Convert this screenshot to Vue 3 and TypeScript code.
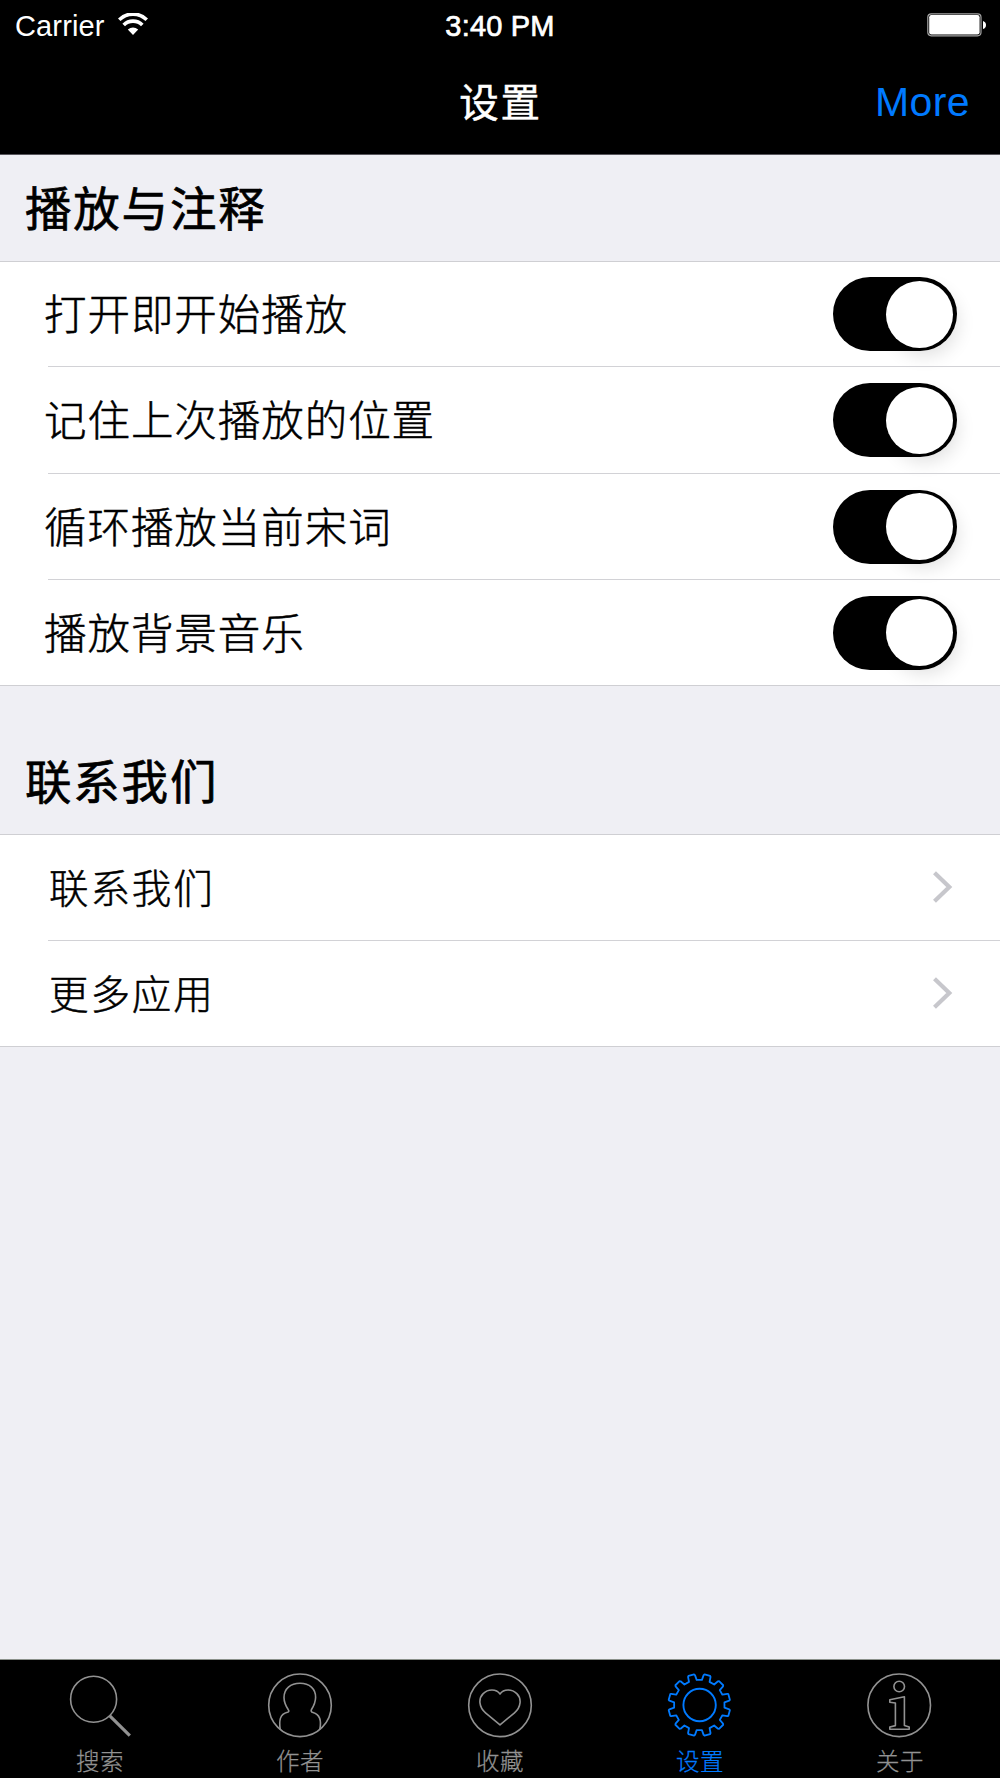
<script setup lang="ts">
import { ref } from 'vue'

interface SwitchRow { label: string; on: boolean }
interface Tab { id: string; label: string }

const switches = ref<SwitchRow[]>([
  { label: '打开即开始播放', on: true },
  { label: '记住上次播放的位置', on: true },
  { label: '循环播放当前宋词', on: true },
  { label: '播放背景音乐', on: true },
])
const links: string[] = ['联系我们', '更多应用']
const tabs: Tab[] = [
  { id: 'search', label: '搜索' },
  { id: 'author', label: '作者' },
  { id: 'favorite', label: '收藏' },
  { id: 'settings', label: '设置' },
  { id: 'about', label: '关于' },
]
const active = ref('settings')

// Outline of a twelve-toothed cog centred on (34.3, 35)
function cogPath(): string {
  const points: string[] = []
  const add = (deg: number, r: number) => {
    const a = (deg * Math.PI) / 180
    points.push(`${(34.3 + r * Math.sin(a)).toFixed(2)} ${(35 - r * Math.cos(a)).toFixed(2)}`)
  }
  for (let i = 0; i < 12; i++) {
    const c = 15 + i * 30
    add(c - 9, 25.3)
    add(c - 6.8, 30.2)
    add(c - 5.4, 31)
    add(c + 5.4, 31)
    add(c + 6.8, 30.2)
    add(c + 9, 25.3)
  }
  return `M${points.join('L')}Z`
}
const cog = cogPath()
</script>

<template>
  <div class="screen">
    <header>
      <div class="status">
        <div class="carrier">
          <span>Carrier</span>
          <svg width="30" height="23" viewBox="0 0 30 23">
            <g fill="none" stroke="#fff" stroke-width="3.7">
              <path d="M1.2 6.8A19.6 19.6 0 0 1 28.8 6.8" />
              <path d="M5.7 12A13.2 13.2 0 0 1 24.3 12" />
            </g>
            <path d="M9.8 16.6Q15 12.2 20.2 16.6L15 22Z" fill="#fff" />
          </svg>
        </div>
        <span class="time">3:40 PM</span>
        <div class="power">
          <svg width="60" height="24" viewBox="0 0 60 24">
            <rect x="0.8" y="0.8" width="53.2" height="22" rx="3.5" fill="none" stroke="#a5a5a5" stroke-width="1.2" />
            <rect x="2.2" y="2" width="50.4" height="19.4" rx="2.2" fill="#fff" />
            <path d="M56 8Q59 9 59 12T56 16Z" fill="#fff" />
          </svg>
        </div>
      </div>
      <div class="nav">
        <h1>设置</h1>
        <a class="more">More</a>
      </div>
    </header>

    <main>
      <h2>播放与注释</h2>
      <ul class="group switches">
        <li v-for="row in switches" :key="row.label">
          <span class="label">{{ row.label }}</span>
          <button class="toggle" :class="{ on: row.on }" @click="row.on = !row.on"><i></i></button>
        </li>
      </ul>
      <h2 class="second">联系我们</h2>
      <ul class="group links">
        <li v-for="link in links" :key="link">
          <span class="label">{{ link }}</span>
          <svg class="chevron" width="20" height="32" viewBox="0 0 20 32">
            <path d="M1.5 1.7L16.3 16L1.5 30.3" fill="none" stroke="#c7c7cc" stroke-width="4.2" />
          </svg>
        </li>
      </ul>
    </main>

    <nav class="tabs">
      <a v-for="tab in tabs" :key="tab.id" :class="{ active: tab.id === active }" @click="active = tab.id">
        <svg width="70" height="70" viewBox="0 0 70 70" fill="none" stroke="currentColor" stroke-width="1.6" stroke-linejoin="round">
          <template v-if="tab.id === 'search'">
            <circle cx="28.6" cy="29.2" r="23" />
            <path d="M44.8 45.8L64.8 65.6" stroke-width="3.2" />
          </template>
          <template v-else-if="tab.id === 'author'">
            <circle cx="35" cy="35.3" r="31.3" />
            <path d="M15.2 59.7C14 51 14.5 44 22.5 42.3C24 42 24.2 41 23.3 39.8C20.5 35.5 19 31.5 19 27.5C19 18.5 25.5 13.3 35 13.3C44.5 13.3 50.8 18.8 50.6 27.5C50.5 32 49.2 35.2 46.5 39.5C45.7 41 46.2 42 48 42.5C55.5 44.5 56.5 51 54.8 59.5" />
          </template>
          <template v-else-if="tab.id === 'favorite'">
            <circle cx="35" cy="35.3" r="31.3" />
            <path d="M35 54.8L20.5 42.8C13.8 37.2 13.2 28.5 18.2 23.6C23 18.8 31.3 18.7 35 24C38.7 18.7 47 18.8 51.8 23.6C56.8 28.5 56.2 37.2 49.5 42.8Z" />
          </template>
          <template v-else-if="tab.id === 'settings'">
            <path :d="cog" stroke-width="1.8" />
            <circle cx="34.6" cy="35" r="16.2" stroke-width="1.9" />
          </template>
          <template v-else>
            <circle cx="34.2" cy="35.3" r="31.3" />
            <circle cx="34.2" cy="16.5" r="5.3" />
            <path d="M24.8 29.7L39.4 26.7V55.6L44.2 57V59.3H24.8V57L30.4 55.6V33L24.8 32.2Z" />
          </template>
        </svg>
        <span>{{ tab.label }}</span>
      </a>
    </nav>
  </div>
</template>

<style>
body { margin: 0; }
</style>

<style scoped>
.screen {
  width: 1000px;
  height: 1778px;
  display: flex;
  flex-direction: column;
  overflow: hidden;
  background: #efeff4;
  color: #000;
  font-family: "Liberation Sans", "Noto Sans CJK SC", sans-serif;
}
header {
  height: 154px;
  flex: none;
  background: #000;
  color: #fff;
  border-bottom: 1px solid #58565c;
}
.status {
  display: grid;
  grid-template-columns: 1fr auto 1fr;
  height: 50px;
  padding: 0 14px 0 15px;
  font-size: 29px;
  line-height: 52px;
}
.carrier { display: flex; letter-spacing: 0.15px; }
.carrier svg { margin: 13px 0 0 13px; }
.time { -webkit-text-stroke: 0.7px #fff; letter-spacing: 0.2px; margin-right: 1px; }
.power { display: flex; justify-content: flex-end; }
.power svg { margin: 13px -1px 0 0; }
.nav {
  display: grid;
  grid-template-columns: 1fr auto 1fr;
  align-items: center;
  height: 104px;
  padding: 0 30px 0 31px;
}
h1 {
  grid-column: 2;
  margin: 0;
  font-size: 39.5px;
  font-weight: 400;
  -webkit-text-stroke: 0.5px #fff;
  line-height: 104px;
  letter-spacing: 1.8px;
  padding-top: 1px;
  height: 103px;
}
.more {
  justify-self: end;
  color: #007aff;
  font-size: 41px;
  line-height: 104px;
  letter-spacing: 0.4px;
}
main { flex: 1; }
h2 {
  box-sizing: border-box;
  margin: 0;
  height: 106px;
  padding: 2px 0 0 25px;
  font-size: 46.5px;
  line-height: 106px;
  font-weight: 400;
  -webkit-text-stroke: 0.7px #000;
  letter-spacing: 1.8px;
}
h2.second { height: 148px; padding-top: 44px; }
.group {
  margin: 0;
  padding: 0;
  list-style: none;
  background: #fff;
  border: solid #cfcfd3;
  border-width: 1px 0;
}
li {
  position: relative;
  box-sizing: border-box;
  display: flex;
  align-items: center;
  justify-content: space-between;
  height: 106px;
}
li + li { padding-top: 2px; }
li:first-child { height: 105px; }
.switches li:first-child { height: 104px; }
.switches li:nth-child(2) { height: 106.5px; }
.switches li:last-child { height: 106.5px; }
li + li::before {
  content: "";
  position: absolute;
  left: 48px;
  right: 0;
  top: 0;
  border-top: 1px solid #d2d2d6;
}
.label {
  font-weight: 300;
  white-space: nowrap;
  -webkit-text-stroke: 0.5px #000;
  padding-bottom: 5px;
}
.switches .label { padding-left: 44px; font-size: 42.5px; letter-spacing: 0.95px; }
.links .label { padding-left: 49px; font-size: 39.5px; letter-spacing: 1.9px; }
.toggle {
  box-sizing: border-box;
  width: 123.5px;
  height: 74px;
  margin-right: 43.5px;
  padding: 3.5px;
  display: flex;
  border: 0;
  border-radius: 38px;
  background: #ccc;
}
.toggle.on { justify-content: flex-end; padding-right: 4px; background: #000; }
.toggle i {
  width: 67px;
  height: 67px;
  border-radius: 50%;
  background: #fff;
  box-shadow: 5px 8px 18px rgba(0, 0, 0, 0.12);
}
.chevron { margin: 0 47.5px 2px 0; }
.tabs {
  display: flex;
  flex: none;
  height: 118px;
  border-top: 1px solid #8b918b;
  background: #000;
  color: #929292;
}
.tabs a {
  flex: 1;
  display: flex;
  flex-direction: column;
  align-items: center;
}
.tabs a.active { color: #007aff; }
.tabs svg { flex: none; margin-top: 10px; }
.tabs span {
  margin-top: 4px;
  font-size: 23.5px;
  line-height: 36px;
  font-weight: 300;
  letter-spacing: 0.6px;
  -webkit-text-stroke: 0.25px currentColor;
}
</style>
